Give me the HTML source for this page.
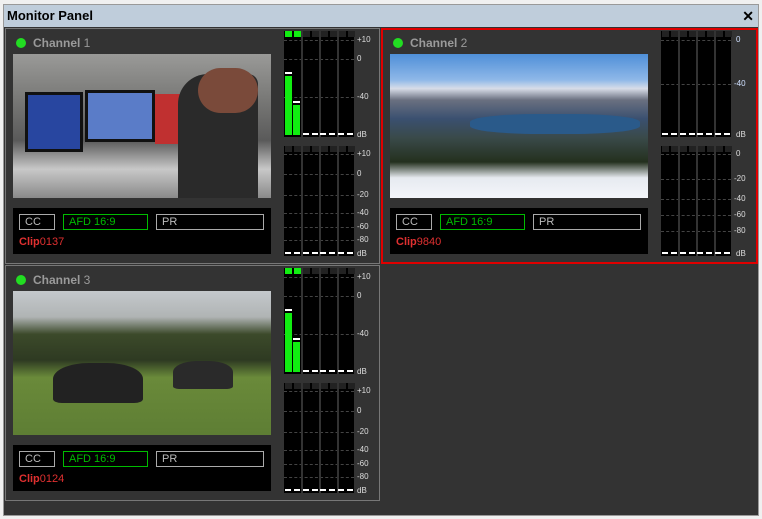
<!DOCTYPE html><html><head><style>
*{margin:0;padding:0;box-sizing:border-box}
body{width:762px;height:519px;background:#f0f0f0;font-family:"Liberation Sans",sans-serif;position:relative;overflow:hidden}
.a{position:absolute}
#win{left:3px;top:4px;width:756px;height:512px;border:1px solid #999;background:#333}
#tb{left:0;top:0;width:754px;height:22px;background:#bfcddb;font-weight:bold;font-size:13px;line-height:22px;padding-left:3px;color:#000}
#x{right:4px;top:0;font-size:14px;font-weight:bold}
.cell{border:1px solid #777;background:#333}
.ttl{font-size:12px;font-weight:bold;color:#9a9a9a}
.dot{width:10px;height:10px;border-radius:5px;background:#22dd22}
.info{background:#000}
.bx{border:1px solid #aaa;color:#bbb;font-size:11px;line-height:14px;padding-left:5px;height:16px}
.g{border-color:#0b0;color:#0b0}
.clip{color:#e03030;font-size:11px;font-weight:bold}
.clip span{font-weight:normal}
.m{background:#000}
.sep{width:2px;background:#333;top:0;bottom:0}
.cap{height:6px;width:7px;background:#222}
.lb{font-size:8px;color:#ddd;left:73px}
.lb2{color:#cfe0ff}
.tk{left:0;width:70px;border-top:1px dashed #444;height:0}
.pk{height:2px;width:6px;background:#fff}
</style></head><body>
<div id="win" class="a">
<div id="tb" class="a">Monitor Panel<span id="x" class="a">✕</span></div>
</div>

<!-- Channel 1 -->
<div class="a cell" style="left:5px;top:28px;width:375px;height:236px"></div>
<div class="a dot" style="left:16px;top:38px"></div>
<div class="a ttl" style="left:33px;top:36px">Channel <span style="font-weight:normal">1</span></div>
<div class="a" style="left:13px;top:54px;width:258px;height:144px;background:linear-gradient(180deg,#9a9a98 0%,#7a7a78 30%,#5a5a5a 60%,#c8c8c8 80%,#8a8a8a 100%)">
 <div class="a" style="left:12px;top:38px;width:58px;height:60px;background:#2846a0;border:3px solid #111"></div>
 <div class="a" style="left:72px;top:36px;width:70px;height:52px;background:#5a7cc8;border:3px solid #111"></div>
 <div class="a" style="left:142px;top:40px;width:30px;height:50px;background:#c03030"></div>
 <div class="a" style="left:165px;top:20px;width:80px;height:124px;background:#2a2a2a;border-radius:30px 10px 0 0"></div>
 <div class="a" style="left:185px;top:14px;width:60px;height:45px;background:#7a4a3a;border-radius:30px"></div>
</div>
<div class="a info" style="left:13px;top:208px;width:258px;height:46px"></div>
<div class="a bx" style="left:19px;top:214px;width:36px">CC</div>
<div class="a bx g" style="left:63px;top:214px;width:85px">AFD 16:9</div>
<div class="a bx" style="left:156px;top:214px;width:108px">PR</div>
<div class="a clip" style="left:19px;top:236px">Clip<span>0137</span></div>

<!-- Channel 2 -->
<div class="a" style="left:381px;top:28px;width:377px;height:236px;border:2px solid #e00000"></div>
<div class="a dot" style="left:393px;top:38px"></div>
<div class="a ttl" style="left:410px;top:36px">Channel <span style="font-weight:normal">2</span></div>
<div class="a" style="left:390px;top:54px;width:258px;height:144px;background:linear-gradient(180deg,#4f8fd8 0%,#8fb8e8 18%,#d8dde8 24%,#6a7080 32%,#3a5070 45%,#3a4a4a 58%,#24301e 75%,#e6eaf0 86%,#f4f6fa 100%)">
 <div class="a" style="left:80px;top:60px;width:170px;height:20px;background:#2a5a8a;border-radius:40%"></div>
</div>
<div class="a info" style="left:390px;top:208px;width:258px;height:46px"></div>
<div class="a bx" style="left:396px;top:214px;width:36px">CC</div>
<div class="a bx g" style="left:440px;top:214px;width:85px">AFD 16:9</div>
<div class="a bx" style="left:533px;top:214px;width:108px">PR</div>
<div class="a clip" style="left:396px;top:236px">Clip<span>9840</span></div>

<!-- Channel 3 -->
<div class="a cell" style="left:5px;top:265px;width:375px;height:236px"></div>
<div class="a dot" style="left:16px;top:275px"></div>
<div class="a ttl" style="left:33px;top:273px">Channel <span style="font-weight:normal">3</span></div>
<div class="a" style="left:13px;top:291px;width:258px;height:144px;background:linear-gradient(180deg,#c4c8cc 0%,#b0b4b4 18%,#3c4a2a 30%,#2e3a22 48%,#6a8a3a 60%,#5e7e34 100%)">
 <div class="a" style="left:40px;top:72px;width:90px;height:40px;background:#222;border-radius:40% 40% 10% 10%"></div>
 <div class="a" style="left:160px;top:70px;width:60px;height:28px;background:#2a2a2a;border-radius:40% 40% 10% 10%"></div>
</div>
<div class="a info" style="left:13px;top:445px;width:258px;height:46px"></div>
<div class="a bx" style="left:19px;top:451px;width:36px">CC</div>
<div class="a bx g" style="left:63px;top:451px;width:85px">AFD 16:9</div>
<div class="a bx" style="left:156px;top:451px;width:108px">PR</div>
<div class="a clip" style="left:19px;top:473px">Clip<span>0124</span></div>

<!-- meters -->
<div id="meters"></div>
<script>
function meter(x,y,h,ticks,labels,blue,bars){
 let s=`<div class="a" style="left:${x}px;top:${y}px;width:100px;height:${h+4}px">`;
 s+=`<div class="a m" style="left:0;top:0;width:70px;height:${h}px">`;
 for(let i=0;i<8;i++)s+=`<div class="a cap" style="left:${1+i*9-(i>1?0:0)}px;top:0;${bars&&i<2?'background:#1e1':''}"></div>`;
 for(const t of ticks)s+=`<div class="a tk" style="top:${t}px"></div>`;
 for(const sx of [8,17,26,35,44,53,62])if(sx%18==17)s+=`<div class="a sep" style="left:${sx}px"></div>`;
 if(bars){for(const[i,t]of bars){s+=`<div class="a" style="left:${1+i*8}px;top:${t}px;width:7px;bottom:2px;background:#1e1"></div><div class="a pk" style="left:${1+i*8}px;top:${t-4}px;width:7px"></div>`;}}
 for(let i=(bars?2:0);i<8;i++)s+=`<div class="a pk" style="left:${1+i*9-(i>3?1:0)}px;bottom:2px"></div>`;
 s+=`</div></div>`;return s;
}
let h='';
const A=[9,28,66],B=[8,28,49,67,81,94];
for(const[ox,oy]of[[284,31],[284,268]]){
 h+=meter(ox,oy,106,A,0,0,[[0,45],[1,74]]);
 h+=meter(ox,oy+115,110,B,0,0,null);
}
h+=meter(661,31,106,[9,53],0,1,null);
h+=meter(661,146,110,[8,33,53,69,85],0,1,null);
document.getElementById('meters').innerHTML=h;
</script>
<div class="a lb" style="left:357px;top:35px">+10</div><div class="a lb" style="left:357px;top:54px">0</div><div class="a lb" style="left:357px;top:92px">-40</div><div class="a lb" style="left:357px;top:130px">dB</div>
<div class="a lb" style="left:357px;top:149px">+10</div><div class="a lb" style="left:357px;top:169px">0</div><div class="a lb" style="left:357px;top:190px">-20</div><div class="a lb" style="left:357px;top:208px">-40</div><div class="a lb" style="left:357px;top:222px">-60</div><div class="a lb" style="left:357px;top:235px">-80</div><div class="a lb" style="left:357px;top:249px">dB</div>
<div class="a lb" style="left:357px;top:272px">+10</div><div class="a lb" style="left:357px;top:291px">0</div><div class="a lb" style="left:357px;top:329px">-40</div><div class="a lb" style="left:357px;top:367px">dB</div>
<div class="a lb" style="left:357px;top:386px">+10</div><div class="a lb" style="left:357px;top:406px">0</div><div class="a lb" style="left:357px;top:427px">-20</div><div class="a lb" style="left:357px;top:445px">-40</div><div class="a lb" style="left:357px;top:459px">-60</div><div class="a lb" style="left:357px;top:472px">-80</div><div class="a lb" style="left:357px;top:486px">dB</div>
<div class="a lb lb2" style="left:736px;top:35px">0</div><div class="a lb lb2" style="left:734px;top:79px">-40</div><div class="a lb" style="left:736px;top:130px">dB</div>
<div class="a lb" style="left:736px;top:149px">0</div><div class="a lb" style="left:734px;top:174px">-20</div><div class="a lb" style="left:734px;top:194px">-40</div><div class="a lb" style="left:734px;top:210px">-60</div><div class="a lb" style="left:734px;top:226px">-80</div><div class="a lb" style="left:736px;top:249px">dB</div>
</body></html>
